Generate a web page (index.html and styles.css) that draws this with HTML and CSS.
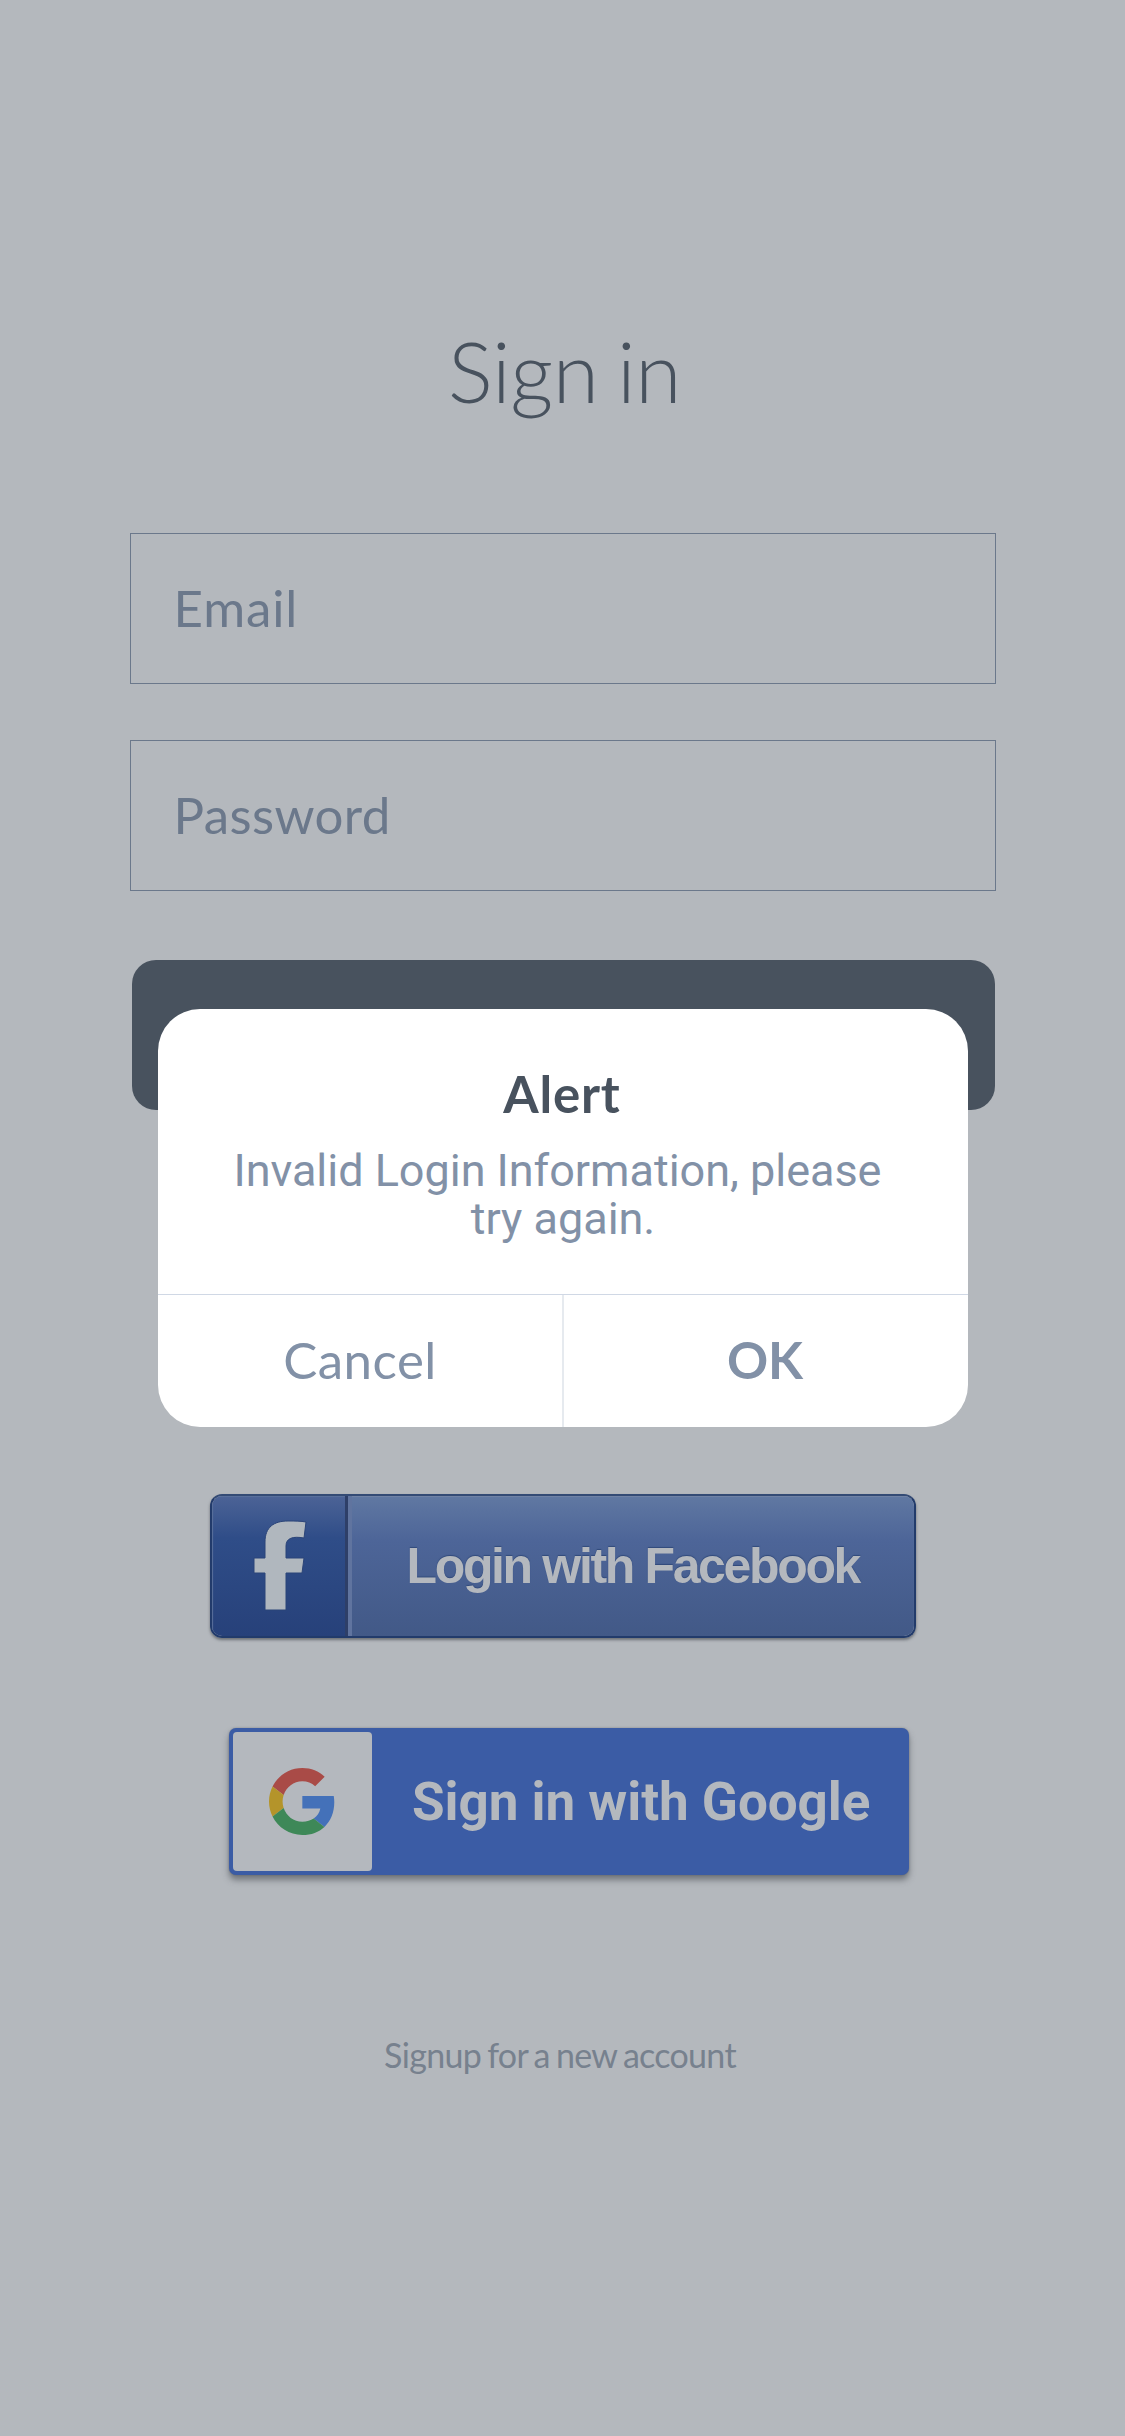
FILE: index.html
```html
<!DOCTYPE html>
<html lang="en">
<head>
<meta charset="utf-8">
<title>Sign in</title>
<link rel="stylesheet" href="styles.css">
</head>
<body>
<main class="screen">
  <h1 class="title">Sign in</h1>
  <div class="field email"><span>Email</span></div>
  <div class="field"><span>Password</span></div>
  <div class="submit"></div>
  <div class="facebook">
    <div class="facebook-logo">
      <svg width="56" height="92" viewBox="0 0 56 92"><path d="M12 90V53H1V38H12V22C12 7 21 1 35 1C42 1 48 1 53 2L51 18C40 16 33 18 33 26V38H51L49 53H33V90Z" fill="#b0b7be" stroke="#2b4478" stroke-width="1"/></svg>
    </div>
    <div class="facebook-label"><span>Login with Facebook</span></div>
  </div>
  <div class="google">
    <div class="google-logo">
      <svg width="66" height="67" viewBox="0 0 47.5 48" preserveAspectRatio="none">
        <path fill="#a94b47" d="M24 9.5c3.54 0 6.71 1.22 9.21 3.6l6.85-6.85C35.9 2.38 30.47 0 24 0 14.62 0 6.51 5.38 2.56 13.22l7.98 6.19C12.43 13.72 17.74 9.5 24 9.5z"/>
        <path fill="#4471b9" d="M46.98 24.55c0-1.57-.15-3.09-.38-4.55H24v9.02h12.94c-.58 2.96-2.26 5.48-4.78 7.18l7.73 6c4.51-4.18 7.09-10.36 7.09-17.65z"/>
        <path fill="#b4942a" d="M10.53 28.59c-.48-1.45-.76-2.99-.76-4.59s.27-3.14.76-4.59l-7.98-6.19C.92 16.46 0 20.12 0 24c0 3.88.92 7.54 2.56 10.78l7.97-6.19z"/>
        <path fill="#3e8858" d="M24 48c6.48 0 11.93-2.13 15.89-5.81l-7.73-6c-2.15 1.45-4.92 2.3-8.16 2.3-6.26 0-11.57-4.22-13.47-9.91l-7.98 6.19C6.51 42.62 14.62 48 24 48z"/>
      </svg>
    </div>
    <div class="google-label"><span>Sign in with Google</span></div>
  </div>
  <p class="signup">Signup for a new account</p>
</main>
<section class="alert">
  <div class="alert-body">
    <h2 class="alert-title">Alert</h2>
    <p class="alert-message">Invalid Login Information, please&nbsp;<br>try again.</p>
  </div>
  <div class="alert-actions">
    <div class="action cancel">Cancel</div>
    <div class="action ok">OK</div>
  </div>
</section>
</body>
</html>
```
FILE: styles.css
```css
* { box-sizing: border-box; }
body {
  margin: 0;
  background: #b4b8bd;
  font-family: Lato, "Liberation Sans", sans-serif;
}
.screen {
  width: 1125px;
  height: 2436px;
  padding-top: 321px;
  display: flex;
  flex-direction: column;
  align-items: center;
}
.title {
  margin: 0 0 112px;
  padding-left: 4px;
  font-size: 84px;
  line-height: 100px;
  font-weight: 300;
  letter-spacing: -.4px;
  word-spacing: -4px;
  color: #48525e;
}
.field {
  width: 866px;
  height: 151px;
  margin-bottom: 56px;
  padding-left: 43px;
  border: 1px solid #6b788b;
  font-size: 51px;
  line-height: 147px;
  letter-spacing: .4px;
  color: #6b788b;
}
.email { letter-spacing: .9px; }
.submit {
  width: 863px;
  height: 150px;
  margin: 13px 0 384px 2px;
  border-radius: 24px;
  background: #48525e;
}
.facebook {
  display: flex;
  width: 706px;
  height: 144px;
  border: 2px solid #223b6b;
  border-top-color: #344b75;
  border-radius: 12px;
  overflow: hidden;
  box-shadow: 0 2px 3px rgba(60, 65, 72, .6);
}
.facebook-logo {
  display: flex;
  width: 136px;
  padding: 24px 0 0 41px;
  border-right: 3px solid #2e3f68;
  background: linear-gradient(#4c6396, #2f4d88 30%, #27417a);
  box-shadow: inset 2px 2px 1px -1px #5a709c;
}
.facebook-label {
  flex: 1;
  padding-left: 55px;
  border-left: 4px solid #60749f;
  background: linear-gradient(#6078a2, #4d6598 32%, #425987);
  box-shadow: inset -1px 2px 1px -1px #7383a6;
  font-family: "Liberation Sans", Arial, sans-serif;
  font-size: 50px;
  line-height: 140px;
  font-weight: 700;
  letter-spacing: -2.35px;
  white-space: nowrap;
  color: #b4b8be;
  text-shadow: 0 -1px 1px #314a7b;
}
.google {
  display: flex;
  width: 680px;
  height: 147px;
  margin: 90px 0 0 13px;
  padding: 4px;
  border-radius: 7px;
  background: #3b5ca5;
  box-shadow: 0 5px 6px rgba(60, 65, 72, .55), 0 0 2px rgba(60, 65, 72, .4);
}
.google-logo {
  display: flex;
  align-items: center;
  justify-content: center;
  width: 139px;
  height: 139px;
  border-radius: 4px;
  padding-right: 1px;
  background: #b4b8be;
}
.google-label {
  padding-left: 40px;
  font-family: Roboto, sans-serif;
  font-size: 53px;
  line-height: 140px;
  font-weight: 700;
  letter-spacing: -.05px;
  white-space: nowrap;
  color: #b4b8be;
}
.signup {
  margin: 159px 5px 0 0;
  font-size: 34px;
  line-height: 42px;
  letter-spacing: -.7px;
  word-spacing: -1.8px;
  color: #77818e;
}
.alert {
  position: absolute;
  left: 158px;
  top: 1009px;
  display: flex;
  flex-direction: column;
  width: 810px;
  height: 418px;
  border-radius: 42px;
  background: #fff;
  text-align: center;
  overflow: hidden;
}
.alert-body {
  height: 286px;
  padding-top: 55px;
  border-bottom: 1px solid #d0d8e5;
}
.alert-title {
  margin: 0;
  padding-right: 2px;
  font-size: 51px;
  line-height: 60px;
  font-weight: 700;
  letter-spacing: .8px;
  color: #48525e;
}
.alert-message {
  margin: 23px 0 0;
  font-family: Roboto, sans-serif;
  font-size: 45px;
  line-height: 48px;
  letter-spacing: -.03px;
  color: #8291a7;
}
.alert-actions {
  display: grid;
  grid-template-columns: 406px 1fr;
  flex: 1;
}
.action {
  font-size: 51px;
  line-height: 130px;
  color: #8291a7;
}
.cancel {
  border-right: 2px solid #e6eaef;
  letter-spacing: .5px;
}
.ok {
  padding-right: 2px;
  font-weight: 700;
}
```
